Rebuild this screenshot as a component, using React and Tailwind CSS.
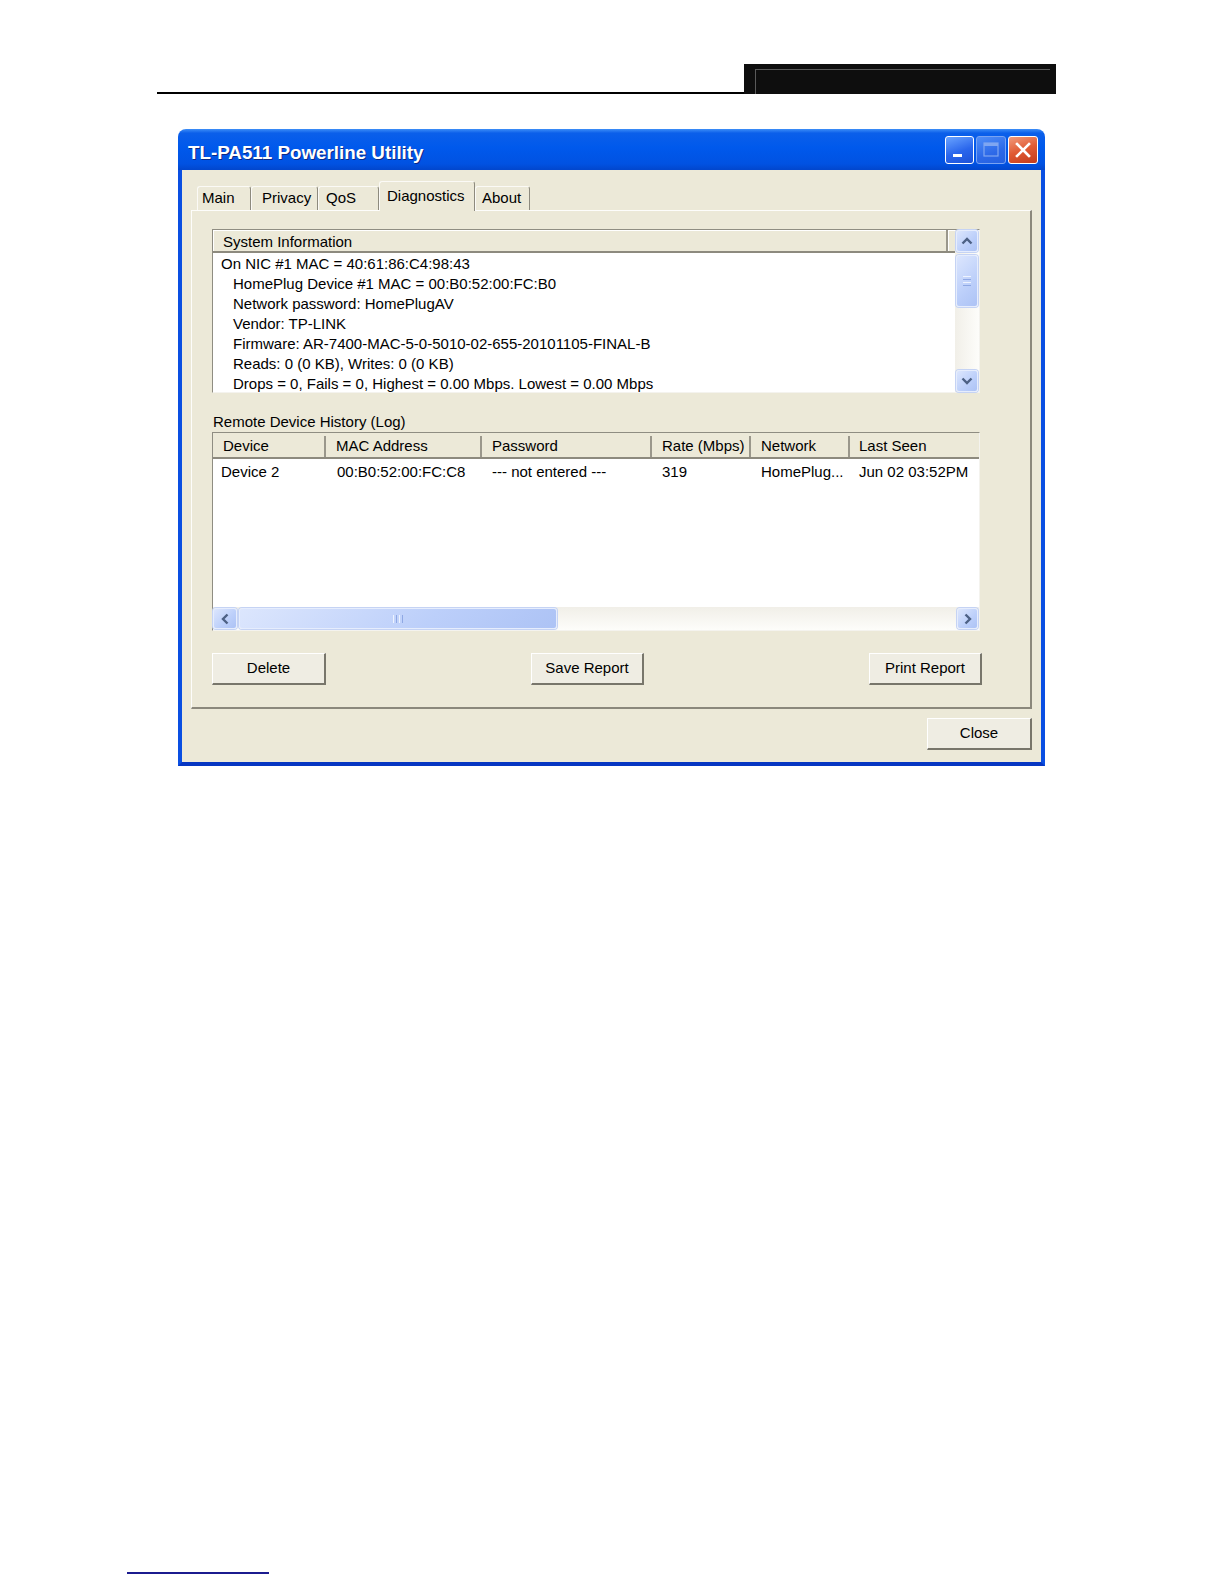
import React from "react";

function ChevUp() {
  return (
    <svg width="12" height="8" viewBox="0 0 12 8">
      <path d="M1.5 6.5 L6 2 L10.5 6.5" stroke="#4d6185" strokeWidth="2.4" fill="none" />
    </svg>
  );
}
function ChevDown() {
  return (
    <svg width="12" height="8" viewBox="0 0 12 8">
      <path d="M1.5 1.5 L6 6 L10.5 1.5" stroke="#4d6185" strokeWidth="2.4" fill="none" />
    </svg>
  );
}
function ChevLeft() {
  return (
    <svg width="8" height="12" viewBox="0 0 8 12">
      <path d="M6.5 1.5 L2 6 L6.5 10.5" stroke="#4d6185" strokeWidth="2.4" fill="none" />
    </svg>
  );
}
function ChevRight() {
  return (
    <svg width="8" height="12" viewBox="0 0 8 12">
      <path d="M1.5 1.5 L6 6 L1.5 10.5" stroke="#4d6185" strokeWidth="2.4" fill="none" />
    </svg>
  );
}

function ScrollBtn({ children, className }) {
  return (
    <div
      className={
        "flex items-center justify-center rounded-[3px] border border-[#e6edfd] bg-[linear-gradient(135deg,#dce6fd,#bccffa_60%,#adc3f5)] shadow-[0_0_0_1px_#c5d3f4] " +
        className
      }
    >
      {children}
    </div>
  );
}

function Tab({ children, selected, className }) {
  return (
    <div
      className={
        (selected ? "h-[30px] -mb-[1px] " : "h-[24px] ") +
        "flex items-center bg-[#ece9d8] border-t border-l border-t-[#fbfaf6] border-l-[#fbfaf6] border-r border-r-[#8d8a7e] rounded-t-[3px] " +
        className
      }
    >
      {children}
    </div>
  );
}

function Btn({ children, className }) {
  return (
    <div
      className={
        "h-[32px] flex items-center justify-center bg-[#efede3] border-t border-l border-t-white border-l-white border-r-2 border-b-2 border-r-[#78766b] border-b-[#78766b] " +
        className
      }
    >
      {children}
    </div>
  );
}

const sysLines = [
  ["On NIC #1 MAC = 40:61:86:C4:98:43", false],
  ["HomePlug Device #1 MAC = 00:B0:52:00:FC:B0", true],
  ["Network password: HomePlugAV", true],
  ["Vendor: TP-LINK", true],
  ["Firmware: AR-7400-MAC-5-0-5010-02-655-20101105-FINAL-B", true],
  ["Reads: 0 (0 KB), Writes: 0 (0 KB)", true],
  ["Drops = 0, Fails = 0, Highest = 0.00 Mbps. Lowest = 0.00 Mbps", true],
];

export default function App() {
  return (
    <div className="w-[1224px] h-[1584px] bg-white flex flex-col overflow-hidden font-['Liberation_Sans',Arial,sans-serif] text-[15px] text-black">
      {/* page header */}
      <div className="flex items-end h-[94px] pl-[157px] shrink-0">
        <div className="w-[587px] h-[2px] bg-black" />
        <div className="w-[312px] h-[30px] bg-[#0e0e0e] pt-[5px] pl-[11px] pr-[6px]">
          <div className="h-full border-t border-l border-[#5a5a5a]" />
        </div>
      </div>

      {/* window */}
      <div className="ml-[178px] mt-[35px] w-[867px] h-[637px] shrink-0 flex flex-col">
        {/* title bar */}
        <div className="h-[41px] shrink-0 flex items-center pl-[10px] pr-[7px] rounded-t-[8px] bg-[linear-gradient(to_bottom,#3d8ef7_0%,#0b5fea_10%,#0059ec_45%,#0152e2_85%,#0246cc_100%)]">
          <span className="text-white font-bold text-[18.8px] leading-none mt-[8px] [text-shadow:1px_1px_0_#0c2a86]">
            TL-PA511 Powerline Utility
          </span>
          <div className="ml-auto flex gap-[2px]">
            <div className="w-[29px] h-[28px] rounded-[3px] border border-white bg-[linear-gradient(160deg,#6aa4ff,#2a66ec_55%,#1d52d8)] flex items-end pb-[6px] pl-[7px]">
              <svg width="9" height="3" viewBox="0 0 9 3">
                <rect x="0" y="0" width="9" height="3" fill="#fff" />
              </svg>
            </div>
            <div className="w-[30px] h-[28px] rounded-[3px] border border-[#79a3f2] bg-[linear-gradient(160deg,#4f8ef8,#2d69e8_60%,#2560e0)] flex items-center justify-center">
              <svg width="16" height="15" viewBox="0 0 16 15">
                <rect x="1" y="1" width="14" height="13" fill="none" stroke="#7fa6f1" strokeWidth="1.2" />
                <rect x="1" y="1" width="14" height="3" fill="#7fa6f1" />
              </svg>
            </div>
            <div className="w-[30px] h-[28px] rounded-[3px] border border-white bg-[linear-gradient(160deg,#f29b7c,#e05a33_50%,#c33b1c)] flex items-center justify-center">
              <svg width="16" height="16" viewBox="0 0 16 16">
                <path d="M2 2 L14 14 M14 2 L2 14" stroke="#fff" strokeWidth="2.6" strokeLinecap="square" />
              </svg>
            </div>
          </div>
        </div>

        {/* client */}
        <div className="flex-1 flex flex-col bg-[#ece9d8] border-x-[4px] border-b-[4px] border-x-[#0a4fe2] border-b-[#0636c2]">
          {/* tabs */}
          <div className="h-[40px] shrink-0 flex items-end pl-[15px] relative z-10">
            <Tab className="w-[54px] pl-[4px]">Main</Tab>
            <Tab className="w-[67px] pl-[10px]">Privacy</Tab>
            <Tab className="w-[61px] pl-[7px]">QoS</Tab>
            <Tab selected className="w-[96px] pl-[7px]">Diagnostics</Tab>
            <Tab className="w-[55px] pl-[6px]">About</Tab>
          </div>

          {/* panel */}
          <div className="ml-[9px] w-[841px] h-[499px] shrink-0 flex flex-col pl-[20px] pt-[18px] border-t border-l border-t-[#fdfdfb] border-l-[#fdfdfb] border-r-2 border-b-2 border-r-[#8b887c] border-b-[#8b887c]">
            {/* system info list */}
            <div className="w-[768px] h-[164px] shrink-0 flex border-t border-l border-t-[#8f8d82] border-l-[#8f8d82] border-r border-b border-r-[#f4f3ee] border-b-[#f4f3ee]">
              <div className="flex-1 flex flex-col bg-white overflow-hidden">
                <div className="h-[23px] shrink-0 flex bg-[#ece9d8] border-b-2 border-b-[#8d8a7e]">
                  <div className="w-[735px] flex items-center pl-[10px] pt-[4px] border-r-2 border-r-[#9a978b] shadow-[inset_1px_1px_0_#fff]">
                    System Information
                  </div>
                  <div className="flex-1 shadow-[inset_1px_1px_0_#fff]" />
                </div>
                <div className="pt-[1px]">
                  {sysLines.map(([t, ind], i) => (
                    <div
                      key={i}
                      className={
                        "h-[20px] leading-[20px] whitespace-nowrap " +
                        (ind ? "pl-[20px]" : "pl-[8px]")
                      }
                    >
                      {t}
                    </div>
                  ))}
                </div>
              </div>
              <div className="w-[24px] shrink-0 flex flex-col bg-[linear-gradient(to_right,#f1efe8,#fdfdfa)]">
                <ScrollBtn className="h-[22px] mx-[1px]">
                  <ChevUp />
                </ScrollBtn>
                <ScrollBtn className="h-[52px] mt-[3px] mx-[1px] flex-col gap-[2px]">
                  <div className="w-[8px] h-[1px] bg-[#eef3fe]" />
                  <div className="w-[8px] h-[1px] bg-[#8fa8e4]" />
                  <div className="w-[8px] h-[1px] bg-[#eef3fe]" />
                  <div className="w-[8px] h-[1px] bg-[#8fa8e4]" />
                </ScrollBtn>
                <div className="flex-1" />
                <ScrollBtn className="h-[22px] mx-[1px]">
                  <ChevDown />
                </ScrollBtn>
              </div>
            </div>

            <div className="mt-[20px] h-[18px] leading-[18px] pl-[1px] shrink-0">
              Remote Device History (Log)
            </div>

            {/* device history list */}
            <div className="mt-[1px] w-[768px] h-[199px] shrink-0 flex flex-col border-t border-l border-t-[#8f8d82] border-l-[#8f8d82] border-r border-b border-r-[#f4f3ee] border-b-[#f4f3ee] bg-white">
              <div className="h-[26px] shrink-0 flex bg-[#ece9d8] border-b-2 border-b-[#8d8a7e] pt-[3px]">
                {[
                  ["Device", "w-[113px]"],
                  ["MAC Address", "w-[156px]"],
                  ["Password", "w-[170px]"],
                  ["Rate (Mbps)", "w-[99px]"],
                  ["Network", "w-[99px]"],
                ].map(([t, w]) => (
                  <div
                    key={t}
                    className={
                      "flex items-center pl-[10px] whitespace-nowrap border-r-2 border-r-[#9a978b] " +
                      w
                    }
                  >
                    {t}
                  </div>
                ))}
                <div className="flex-1 flex items-center pl-[9px] whitespace-nowrap">
                  Last Seen
                </div>
              </div>
              <div className="flex-1 pt-[3px]">
                <div className="h-[20px] leading-[20px] flex whitespace-nowrap">
                  <div className="w-[113px] pl-[8px]">Device 2</div>
                  <div className="w-[156px] pl-[11px]">00:B0:52:00:FC:C8</div>
                  <div className="w-[170px] pl-[10px]">--- not entered ---</div>
                  <div className="w-[99px] pl-[10px]">319</div>
                  <div className="w-[99px] pl-[10px]">HomePlug...</div>
                  <div className="flex-1 pl-[9px]">Jun 02 03:52PM</div>
                </div>
              </div>
              <div className="h-[23px] shrink-0 flex items-stretch py-[1px] bg-[linear-gradient(to_bottom,#f1efe8,#fdfdfa)]">
                <ScrollBtn className="w-[24px]">
                  <ChevLeft />
                </ScrollBtn>
                <ScrollBtn className="w-[318px] ml-[2px] gap-[2px]">
                  <div className="w-[1px] h-[8px] bg-[#eef3fe]" />
                  <div className="w-[1px] h-[8px] bg-[#8fa8e4]" />
                  <div className="w-[1px] h-[8px] bg-[#eef3fe]" />
                  <div className="w-[1px] h-[8px] bg-[#8fa8e4]" />
                </ScrollBtn>
                <div className="flex-1" />
                <ScrollBtn className="w-[21px] mr-[1px]">
                  <ChevRight />
                </ScrollBtn>
              </div>
            </div>

            {/* buttons */}
            <div className="mt-[22px] flex shrink-0">
              <Btn className="w-[114px]">Delete</Btn>
              <Btn className="w-[113px] ml-[205px]">Save Report</Btn>
              <Btn className="w-[113px] ml-[225px]">Print Report</Btn>
            </div>
          </div>

          <div className="mt-[9px] mr-[9px] self-end">
            <Btn className="w-[105px]">Close</Btn>
          </div>
        </div>
      </div>

      {/* footer line */}
      <div className="mt-[806px] ml-[127px] w-[142px] h-[2px] bg-[#1b1b8f] shrink-0" />
    </div>
  );
}
